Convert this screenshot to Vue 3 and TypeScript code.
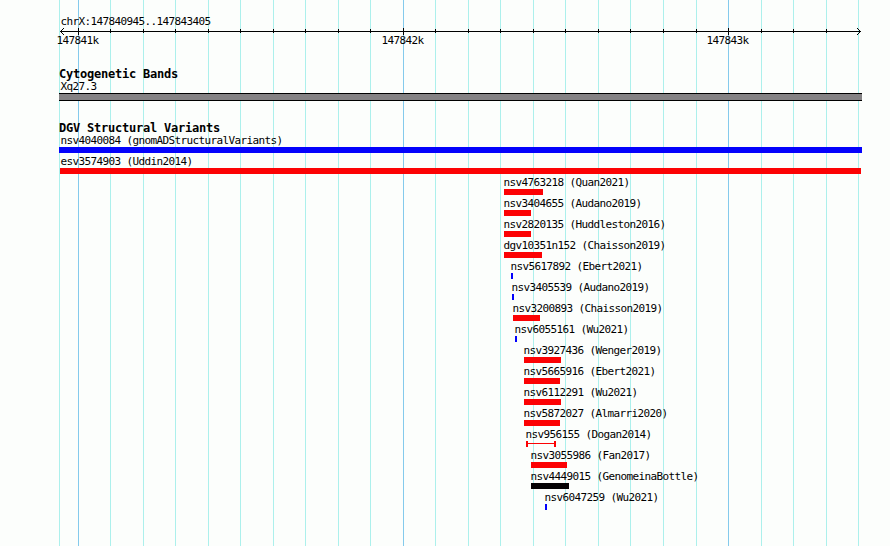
<script setup lang="ts">
interface Variant {
  label: string
  start: number
  end: number
  color: 'red' | 'blue' | 'black'
  range?: boolean
}

const minorLines: number[] = [
  59, 110, 143, 175, 208, 240, 273, 305, 338, 370, 435, 468, 500, 533, 565, 598,
  630, 663, 696, 761, 793, 826, 858,
]
const majorLines: { x: number; label: string }[] = [
  { x: 78, label: '147841k' },
  { x: 403, label: '147842k' },
  { x: 728, label: '147843k' },
]
const minorTicks = minorLines.slice(1, -1)

const variants: Variant[] = [
  { label: 'nsv4040084 (gnomADStructuralVariants)', start: 59, end: 862, color: 'blue' },
  { label: 'esv3574903 (Uddin2014)', start: 60, end: 861, color: 'red' },
  { label: 'nsv4763218 (Quan2021)', start: 504, end: 543, color: 'red' },
  { label: 'nsv3404655 (Audano2019)', start: 504, end: 531, color: 'red' },
  { label: 'nsv2820135 (Huddleston2016)', start: 504, end: 531, color: 'red' },
  { label: 'dgv10351n152 (Chaisson2019)', start: 504, end: 542, color: 'red' },
  { label: 'nsv5617892 (Ebert2021)', start: 511, end: 513, color: 'blue' },
  { label: 'nsv3405539 (Audano2019)', start: 512, end: 514, color: 'blue' },
  { label: 'nsv3200893 (Chaisson2019)', start: 513, end: 540, color: 'red' },
  { label: 'nsv6055161 (Wu2021)', start: 515, end: 517, color: 'blue' },
  { label: 'nsv3927436 (Wenger2019)', start: 524, end: 561, color: 'red' },
  { label: 'nsv5665916 (Ebert2021)', start: 524, end: 560, color: 'red' },
  { label: 'nsv6112291 (Wu2021)', start: 524, end: 561, color: 'red' },
  { label: 'nsv5872027 (Almarri2020)', start: 524, end: 560, color: 'red' },
  { label: 'nsv956155 (Dogan2014)', start: 526, end: 556, color: 'red', range: true },
  { label: 'nsv3055986 (Fan2017)', start: 531, end: 567, color: 'red' },
  { label: 'nsv4449015 (GenomeinaBottle)', start: 531, end: 569, color: 'black' },
  { label: 'nsv6047259 (Wu2021)', start: 545, end: 547, color: 'blue' },
]

// Labels sit just left of their bar, but never left of the panel's text margin.
const labelOffset = (v: Variant): number => Math.max(v.start - 0.6, 60.4) - v.start
</script>

<template>
  <main class="browser">
    <svg class="grid" width="890" height="546" shape-rendering="crispEdges" aria-hidden="true">
      <rect v-for="x in minorLines" :key="x" class="minor" :x="x" y="0" width="1" height="546" />
      <rect v-for="m in majorLines" :key="m.x" class="major" :x="m.x" y="0" width="1" height="546" />
    </svg>

    <header class="ruler">
      <div class="text region">chrX:147840945..147843405</div>
      <svg class="axis" width="890" height="7" shape-rendering="crispEdges">
        <rect x="60" y="3" width="801" height="1" />
        <path d="M61 2h1v1h-1zM62 1h1v1h-1zM63 0h1v1h-1zM61 4h1v1h-1zM62 5h1v1h-1zM63 6h1v1h-1z" />
        <path d="M859 2h1v1h-1zM858 1h1v1h-1zM857 0h1v1h-1zM859 4h1v1h-1zM858 5h1v1h-1zM857 6h1v1h-1z" />
        <rect v-for="x in minorTicks" :key="x" :x="x" y="1" width="1" height="4" />
        <rect v-for="m in majorLines" :key="m.x" :x="m.x" y="0" width="1" height="7" />
      </svg>
      <div class="scale">
        <span v-for="m in majorLines" :key="m.x" class="text">{{ m.label }}</span>
      </div>
    </header>

    <section class="bands">
      <h2 class="title">Cytogenetic Bands</h2>
      <div class="text region">Xq27.3</div>
      <div class="band"></div>
    </section>

    <section class="variants">
      <h2 class="title">DGV Structural Variants</h2>
      <div
        v-for="v in variants"
        :key="v.label"
        class="variant"
        :style="{ paddingLeft: v.start + 'px' }"
      >
        <div class="text" :style="{ marginLeft: labelOffset(v) + 'px' }">{{ v.label }}</div>
        <div
          class="bar"
          :class="[v.color, { range: v.range }]"
          :style="{ width: v.end - v.start + 'px' }"
        ></div>
      </div>
    </section>
  </main>
</template>

<style>
body {
  margin: 0;
  background: #fcfefc;
}
</style>

<style scoped>
.browser {
  position: relative;
  width: 890px;
  height: 546px;
  overflow: hidden;
  box-sizing: border-box;
  padding-top: 15px;
  background: #fcfefc;
  color: #000;
}
.grid {
  position: absolute;
  inset: 0;
}
.minor {
  fill: #acf0ec;
}
.major {
  fill: #84caec;
}
.ruler,
.bands,
.variants {
  position: relative;
}
.text {
  height: 13px;
  font: 11px/13px 'DejaVu Sans Mono', monospace;
  letter-spacing: -0.622px;
  white-space: pre;
}
.title {
  margin: 0;
  padding-left: 59px;
  height: 12px;
  font: bold 12px/13px 'DejaVu Sans Mono', monospace;
  letter-spacing: -0.224px;
  white-space: pre;
}
.region {
  padding-left: 60.4px;
}
.axis {
  display: block;
}
.scale {
  display: flex;
  gap: 283px;
  margin-top: -1px;
  padding-left: 56.4px;
}
.bands {
  margin-top: 21px;
}
.band {
  box-sizing: border-box;
  width: 803px;
  height: 8px;
  margin-left: 59px;
  border: solid #000;
  border-width: 1px 0;
  background: #848284;
}
.variants {
  margin-top: 21px;
}
.variant {
  box-sizing: border-box;
  height: 21px;
}
.bar {
  height: 6px;
}
.red {
  background: #fc0204;
}
.blue {
  background: #0402fc;
}
.black {
  background: #040204;
}
.range {
  box-sizing: border-box;
  border: solid #fc0204;
  border-width: 0 2px;
  background: linear-gradient(#fc0204, #fc0204) 0 2px / 100% 1px no-repeat;
}
</style>
